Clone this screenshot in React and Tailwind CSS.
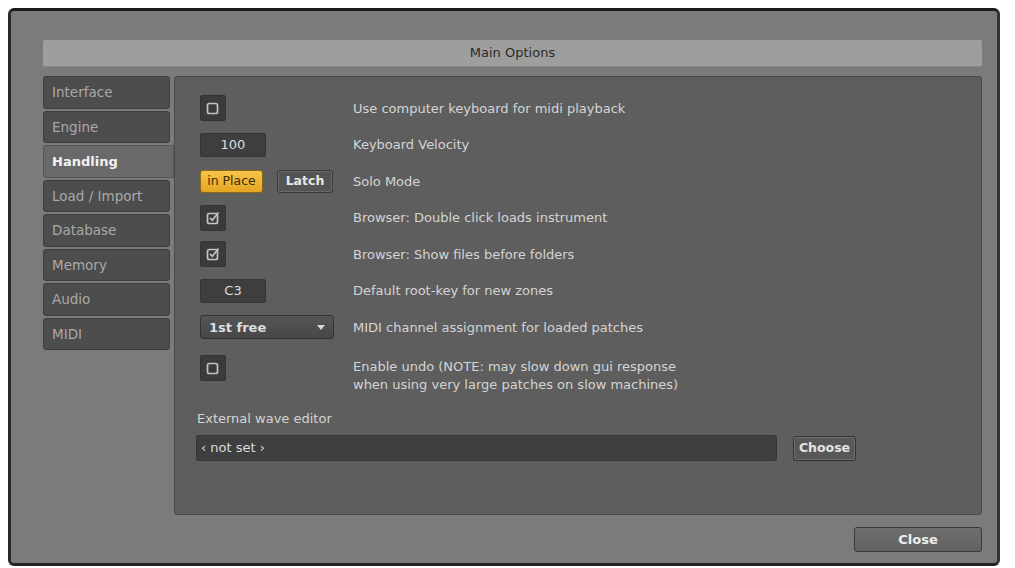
import React from 'react';

const font = { fontFamily: '"DejaVu Sans", "Liberation Sans", sans-serif' };

const tabs = ['Interface', 'Engine', 'Handling', 'Load / Import', 'Database', 'Memory', 'Audio', 'MIDI'];

const CheckBox = ({ checked }) => (
  <div className="w-[26px] h-[26px] bg-[#3b3b3b] rounded-[2px] border border-[#333] flex items-center justify-center">
    <svg width="16" height="16" viewBox="0 0 16 16">
      <rect x="2.5" y="3.5" width="10" height="10" rx="1.8" fill="none" stroke="#c4c4c4" strokeWidth="1.7" />
      {checked && <path d="M5 8 L7.3 10.2 L13.5 2.5" fill="none" stroke="#c4c4c4" strokeWidth="1.7" />}
    </svg>
  </div>
);

const ValueField = ({ value }) => (
  <div className="w-[66px] h-[24px] bg-[#3e3e3e] border border-[#353535] rounded-[2px] flex items-center justify-center text-[13px] text-[#dcdcdc]">
    {value}
  </div>
);

const Row = ({ control, label }) => (
  <div className="h-[36.5px] flex items-center">
    <div className="w-[153px] flex items-center">{control}</div>
    <div className="text-[13px] text-[#d4d4d4]">{label}</div>
  </div>
);

export default function App() {
  return (
    <div className="w-[1015px] h-[568px] bg-white pt-[8px] pl-[8px]" style={font}>
      <div className="w-[992px] h-[558px] bg-[#7b7b7b] rounded-[6px] border-[3px] border-t-[#1a1a1a] border-l-[#2a2a2a] border-r-[#333] border-b-[#222] pt-[29px] pl-[32px] pr-[15px] flex flex-col">
        {/* Title bar */}
        <div className="h-[27px] bg-[#9e9e9e] rounded-[2px] border-b border-[#888] flex items-center justify-center text-[13px] text-[#2a2a2a]">
          Main Options
        </div>

        <div className="mt-[9px] flex">
          {/* Sidebar */}
          <div className="w-[127px] flex flex-col gap-[2px]">
            {tabs.map((t) => (
              <div
                key={t}
                className={
                  t === 'Handling'
                    ? 'h-[32.5px] mr-[-4px] bg-[#696969] border border-[#555] rounded-l-[3px] flex items-center pl-[8px] text-[13px] font-bold text-[#f2f2f2]'
                    : 'h-[32.5px] bg-[#4d4d4d] border border-[#3c3c3c] rounded-[3px] flex items-center pl-[8px] text-[13.5px] text-[#a9a9a9]'
                }
              >
                {t}
              </div>
            ))}
          </div>

          {/* Panel */}
          <div className="ml-[4px] flex-1 h-[439px] bg-[#5e5e5e] border border-[#4a4a4a] rounded-[3px] pl-[25px] pt-[13px]">
            <Row control={<CheckBox />} label="Use computer keyboard for midi playback" />
            <Row control={<ValueField value="100" />} label="Keyboard Velocity" />
            <Row
              control={
                <div className="flex gap-[14px]">
                  <div className="w-[63px] h-[23px] bg-gradient-to-b from-[#f7c54a] to-[#e5a51f] border border-[#8a6a14] rounded-[3px] flex items-center justify-center text-[12.5px] text-[#3b2e00]">
                    in Place
                  </div>
                  <div className="w-[56px] h-[23px] bg-[#545454] border border-[#3a3a3a] shadow-[inset_0_0_0_1px_#6a6a6a] rounded-[3px] flex items-center justify-center text-[12.5px] font-bold text-[#e6e6e6]">
                    Latch
                  </div>
                </div>
              }
              label="Solo Mode"
            />
            <Row control={<CheckBox checked />} label="Browser: Double click loads instrument" />
            <Row control={<CheckBox checked />} label="Browser: Show files before folders" />
            <Row control={<ValueField value="C3" />} label="Default root-key for new zones" />
            <Row
              control={
                <div className="w-[134px] h-[24px] bg-gradient-to-b from-[#555] to-[#474747] border border-[#333] rounded-[3px] flex items-center justify-between pl-[8px] pr-[8px] text-[13px] font-bold text-[#dedede]">
                  <span>1st free</span>
                  <svg width="8" height="5" viewBox="0 0 8 5">
                    <path d="M0 0 L8 0 L4 5 Z" fill="#d8d8d8" />
                  </svg>
                </div>
              }
              label="MIDI channel assignment for loaded patches"
            />
            <div className="mt-[9px] flex items-start">
              <div className="w-[153px]">
                <CheckBox />
              </div>
              <div className="pt-[3px] text-[13px] leading-[18px] text-[#d4d4d4]">
                Enable undo (NOTE: may slow down gui response
                <br />
                when using very large patches on slow machines)
              </div>
            </div>

            <div className="ml-[-3px] mt-[15px] text-[13px] text-[#d4d4d4]">External wave editor</div>
            <div className="ml-[-4px] mt-[7px] flex items-center">
              <div className="w-[581px] h-[26px] bg-[#3f3f3f] border border-[#353535] rounded-[2px] flex items-center pl-[4px] text-[13px] text-[#dcdcdc]">
                ‹ not set ›
              </div>
              <div className="ml-[16px] w-[63px] h-[25px] bg-[#585858] border border-[#333] shadow-[inset_0_0_0_1px_#6e6e6e] rounded-[3px] flex items-center justify-center text-[12.5px] font-bold text-[#e4e4e4]">
                Choose
              </div>
            </div>
          </div>
        </div>

        {/* Footer */}
        <div className="mt-[12px] flex justify-end">
          <div className="w-[128px] h-[25px] bg-gradient-to-b from-[#6e6e6e] to-[#626262] border border-[#3a3a3a] rounded-[3px] flex items-center justify-center text-[13px] font-bold text-[#eeeeee]">
            Close
          </div>
        </div>
      </div>
    </div>
  );
}
